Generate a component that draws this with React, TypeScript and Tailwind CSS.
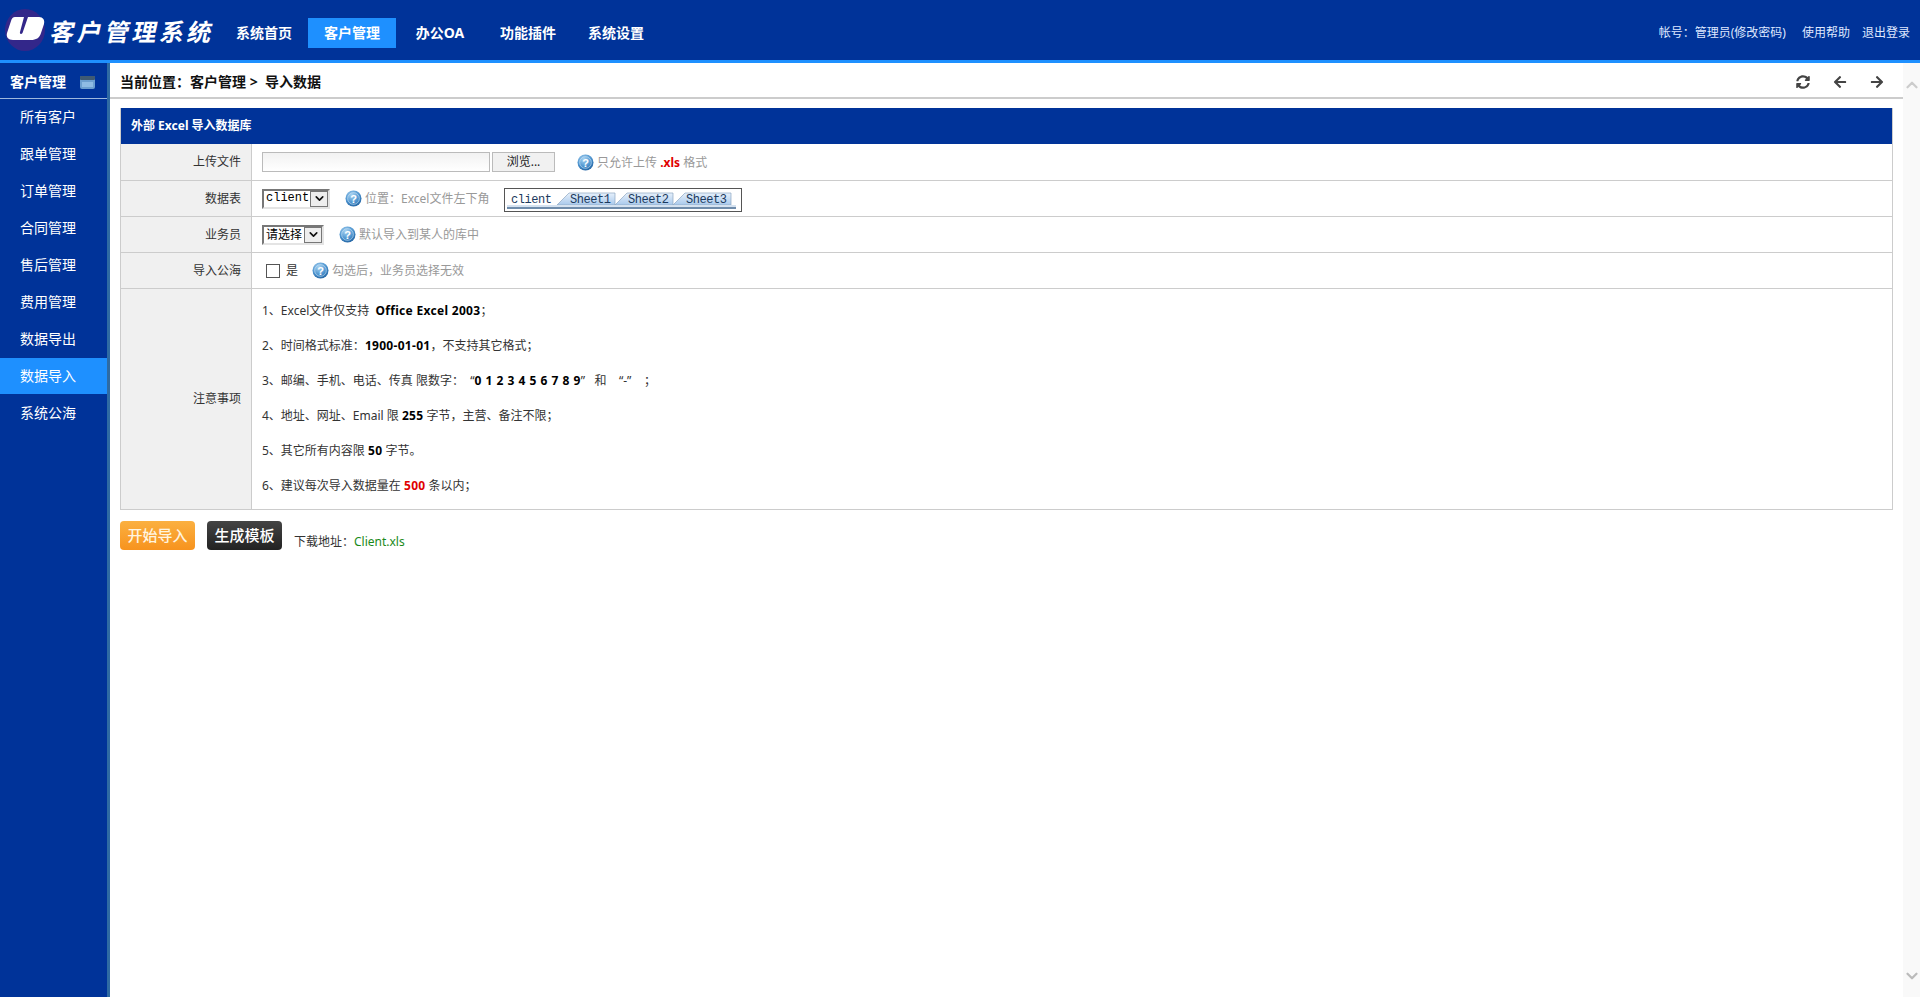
import { ChevronDown, ChevronUp } from "lucide-react";
import { FaArrowLeft, FaArrowRight, FaSyncAlt } from "react-icons/fa";

const font = "font-['Noto_Sans','Noto_Sans_CJK_SC',sans-serif]";

const navItems = ["系统首页", "客户管理", "办公OA", "功能插件", "系统设置"];
const sideItems = ["所有客户", "跟单管理", "订单管理", "合同管理", "售后管理", "费用管理", "数据导出", "数据导入", "系统公海"];

function Logo() {
  return (
    <svg width="46" height="46" viewBox="0 0 46 46" className="shrink-0">
      <ellipse cx="23" cy="23" rx="20" ry="21" fill="#33278a" />
      <path
        d="M13 10h9l-4 15c-.6 2 1.400 2.600 2.500 1L26 10h11c4 0 6 3 5 7l-3 9c-1.500 5-5 7-10 7H11c-5 0-7-3-6-7l4-12c.7-2.500 2-4 4-4z"
        fill="#fff"
      />
    </svg>
  );
}

function HelpIcon() {
  return (
    <svg width="17" height="17" viewBox="0 0 17 17" className="shrink-0">
      <defs>
        <radialGradient id="help" cx="40%" cy="30%" r="75%">
          <stop offset="0%" stopColor="#a9d3f2" />
          <stop offset="60%" stopColor="#4d94cf" />
          <stop offset="100%" stopColor="#1e5f9e" />
        </radialGradient>
      </defs>
      <circle cx="8.500" cy="8.500" r="8" fill="url(#help)" />
      <circle cx="8.500" cy="8.500" r="5.800" fill="none" stroke="#d7ebfa" strokeWidth="0.800" opacity="0.700" />
      <text x="8.500" y="12.500" textAnchor="middle" fontSize="11" fontWeight="700" fill="#fff" fontFamily="Liberation Sans">
        ?
      </text>
    </svg>
  );
}

function Hint({ children }: { children: React.ReactNode }) {
  return (
    <span className="flex items-center gap-[3px] text-xs text-[#999]">
      <HelpIcon />
      <span className="pt-px">{children}</span>
    </span>
  );
}

function FakeSelect({ value, width, mono }: { value: string; width: string; mono?: boolean }) {
  return (
    <div className={`flex h-5 items-stretch border-2 border-t-[#777] border-l-[#777] border-r-[#e4e4e4] border-b-[#e4e4e4] bg-white ${width}`}>
      <span className={`flex-1 overflow-hidden whitespace-nowrap pl-[2px] text-xs leading-[15px] text-black ${mono ? "font-['Liberation_Mono',monospace]" : ""}`}>
        {value}
      </span>
      <span className="flex w-[18px] shrink-0 items-center justify-center border border-[#777] bg-[#eee]">
        <ChevronDown size={13} strokeWidth={3} color="#111" />
      </span>
    </div>
  );
}

function SheetTabs() {
  const tabs = [
    { label: "Sheet1", x: 53 },
    { label: "Sheet2", x: 111 },
    { label: "Sheet3", x: 169 },
  ];
  return (
    <svg width="238" height="24" viewBox="0 0 238 24" className="shrink-0">
      <defs>
        <linearGradient id="tab" x1="0" y1="0" x2="0" y2="1">
          <stop offset="0%" stopColor="#e6f0fb" />
          <stop offset="100%" stopColor="#a9c9ec" />
        </linearGradient>
      </defs>
      <rect x="0.500" y="0.500" width="237" height="23" fill="#fff" stroke="#555" />
      {tabs.map((t) => (
        <g key={t.label}>
          <path d={`M${t.x} 17L${t.x + 12} 5H${t.x + 58}V17Z`} fill="url(#tab)" stroke="#8ea6c2" strokeWidth="0.700" />
          <text x={t.x + 13} y="15" fontSize="12" fontFamily="Liberation Mono" fill="#1c3a5e" textLength="41">
            {t.label}
          </text>
        </g>
      ))}
      <text x="7" y="15" fontSize="12" fontFamily="Liberation Mono" fill="#1c3a5e" textLength="41">
        client
      </text>
      <rect x="3" y="17" width="229" height="2" fill="#d5e2f0" />
      <rect x="3" y="19" width="229" height="2" fill="#6f8cab" />
    </svg>
  );
}

function Row({ label, height = "h-9", children }: { label: string; height?: string; children: React.ReactNode }) {
  return (
    <div className={`flex border-b border-[#ccc] ${height}`}>
      <div className="flex w-[131px] shrink-0 items-center justify-end border-r border-[#ccc] bg-[#f0f0f0] pr-[10px] text-xs text-[#333]">
        {label}
      </div>
      <div className="flex flex-1 items-center pl-[10px]">{children}</div>
    </div>
  );
}

export default function App() {
  return (
    <div className={`flex h-[997px] flex-col overflow-hidden bg-white ${font}`}>
      <header className="flex h-[63px] shrink-0 border-b-[3px] border-[#1e90ff] bg-[#003399]">
        <div className="flex w-[220px] shrink-0 items-center pl-[2px]">
          <Logo />
          <span className="ml-[3px] mt-[4px] -skew-x-12 whitespace-nowrap text-[24px] font-bold leading-none tracking-[3.400px] text-white">
            客户管理系统
          </span>
        </div>
        <nav className="flex pt-[18px]">
          {navItems.map((item) => (
            <a
              key={item}
              className={`flex h-[30px] w-[88px] items-center justify-center text-sm font-bold text-white ${item === "客户管理" ? "bg-[#1e90ff]" : ""}`}
            >
              {item}
            </a>
          ))}
        </nav>
        <div className="ml-auto flex items-center gap-3 pr-[10px] pt-[5px] text-xs text-[#dfe8ff]">
          <span>帐号：管理员(修改密码)</span>
          <span className="pl-1">使用帮助</span>
          <span>退出登录</span>
        </div>
      </header>

      <div className="flex min-h-0 flex-1">
        <aside className="w-[110px] shrink-0 border-r-[3px] border-[#2f6ba3] bg-[#003399]">
          <div className="flex h-9 items-center justify-between border-b border-[#9db8dd] pl-[10px] pr-[11px] pt-[3px] text-sm font-bold text-white">
            <span>客户管理</span>
            <svg width="16" height="15" viewBox="0 0 16 15">
              <rect x="0" y="1" width="15" height="13" rx="2" fill="#6c9fd0" />
              <rect x="0" y="1" width="15" height="4" rx="1" fill="#3f5a73" />
              <rect x="2" y="7" width="11" height="5" fill="#8fbce4" />
            </svg>
          </div>
          <ul className="flex flex-col gap-px">
            {sideItems.map((item) => (
              <li
                key={item}
                className={`flex h-9 items-center pl-5 text-sm text-white ${item === "数据导入" ? "bg-[#1e90ff]" : ""}`}
              >
                {item}
              </li>
            ))}
          </ul>
        </aside>

        <main className="flex min-w-0 flex-1 flex-col">
          <div className="flex h-9 shrink-0 items-center justify-between border-b-2 border-[#ccc] pl-[10px] pr-[19px] text-sm font-bold text-[#111]">
            <span className="pt-[3px]">当前位置：客户管理 &gt;&nbsp; 导入数据</span>
            <div className="flex items-center gap-[23px] pt-[3px] text-[#444]">
              <FaSyncAlt size={14} />
              <FaArrowLeft size={14} />
              <FaArrowRight size={14} />
            </div>
          </div>

          <div className="px-[10px] pt-[9px]">
            <section className="border border-t-0 border-[#ccc]">
              <div className="flex h-9 items-center bg-[#003399] pb-px pl-[10px] text-xs font-bold text-white">外部 Excel 导入数据库</div>

              <Row label="上传文件" height="h-[37px]">
                <div className="h-5 w-[228px] border border-[#bbb] bg-[linear-gradient(#f2f2f2,#fff)]" />
                <div className="ml-[2px] flex h-5 w-[63px] items-center justify-center border border-[#bbb] bg-[#f1f1f1] text-xs text-[#222]">
                  浏览...
                </div>
                <div className="ml-[22px]">
                  <Hint>
                    只允许上传 <b className="text-[#e00000]">.xls</b> 格式
                  </Hint>
                </div>
              </Row>

              <Row label="数据表">
                <FakeSelect value="client" width="w-[68px]" mono />
                <div className="ml-[15px]">
                  <Hint>位置：Excel文件左下角</Hint>
                </div>
                <div className="ml-[15px] mt-[2px]">
                  <SheetTabs />
                </div>
              </Row>

              <Row label="业务员">
                <FakeSelect value="请选择" width="w-[62px]" />
                <div className="ml-[15px]">
                  <Hint>默认导入到某人的库中</Hint>
                </div>
              </Row>

              <Row label="导入公海">
                <span className="ml-1 h-[14px] w-[14px] border border-[#555] bg-white" />
                <span className="ml-[6px] text-xs text-[#333]">是</span>
                <div className="ml-[14px]">
                  <Hint>勾选后，业务员选择无效</Hint>
                </div>
              </Row>

              <div className="flex h-[220px]">
                <div className="flex w-[131px] shrink-0 items-center justify-end border-r border-[#ccc] bg-[#f0f0f0] pr-[10px] text-xs text-[#333]">
                  注意事项
                </div>
                <div className="pl-[10px] pt-[4px] text-xs leading-[35px] text-[#333]">
                  <p>
                    1、Excel文件仅支持&nbsp; <b className="tracking-[0.300px] text-black">Office Excel 2003</b>；
                  </p>
                  <p>
                    2、时间格式标准：<b className="tracking-[0.300px] text-black">1900-01-01</b>，不支持其它格式；
                  </p>
                  <p>
                    3、邮编、手机、电话、传真 限数字：&nbsp; “<b className="tracking-[0.500px] text-black">0 1 2 3 4 5 6 7 8 9</b>”&nbsp;&nbsp;&nbsp;和&nbsp;&nbsp;&nbsp;&nbsp;“-”&nbsp;&nbsp;&nbsp;&nbsp;；
                  </p>
                  <p>
                    4、地址、网址、Email 限 <b className="tracking-[0.300px] text-black">255</b> 字节，主营、备注不限；
                  </p>
                  <p>
                    5、其它所有内容限 <b className="tracking-[0.300px] text-black">50</b> 字节。
                  </p>
                  <p>
                    6、建议每次导入数据量在 <b className="tracking-[0.300px] text-[#e00000]">500</b> 条以内；
                  </p>
                </div>
              </div>
            </section>

            <div className="mt-[10px] flex items-center">
              <button className="h-[29px] w-[75px] rounded bg-[linear-gradient(#fbb040,#f7931e)] text-[15px] font-medium text-[#fff5e0]">开始导入</button>
              <button className="ml-3 h-[29px] w-[75px] rounded bg-[linear-gradient(#444,#222)] text-[15px] font-medium text-white">生成模板</button>
              <span className="ml-3 mt-[14px] text-xs text-[#333]">
                下载地址：<a className="text-[#1a8a1a]">Client.xls</a>
              </span>
            </div>
          </div>
        </main>

        <div className="flex w-[17px] shrink-0 flex-col items-center justify-between bg-[#f9f9f9] pb-[12px] pt-[13px]">
          <ChevronUp size={18} strokeWidth={3} color="#ccc" />
          <ChevronDown size={18} strokeWidth={3} color="#bbb" />
        </div>
      </div>
    </div>
  );
}
